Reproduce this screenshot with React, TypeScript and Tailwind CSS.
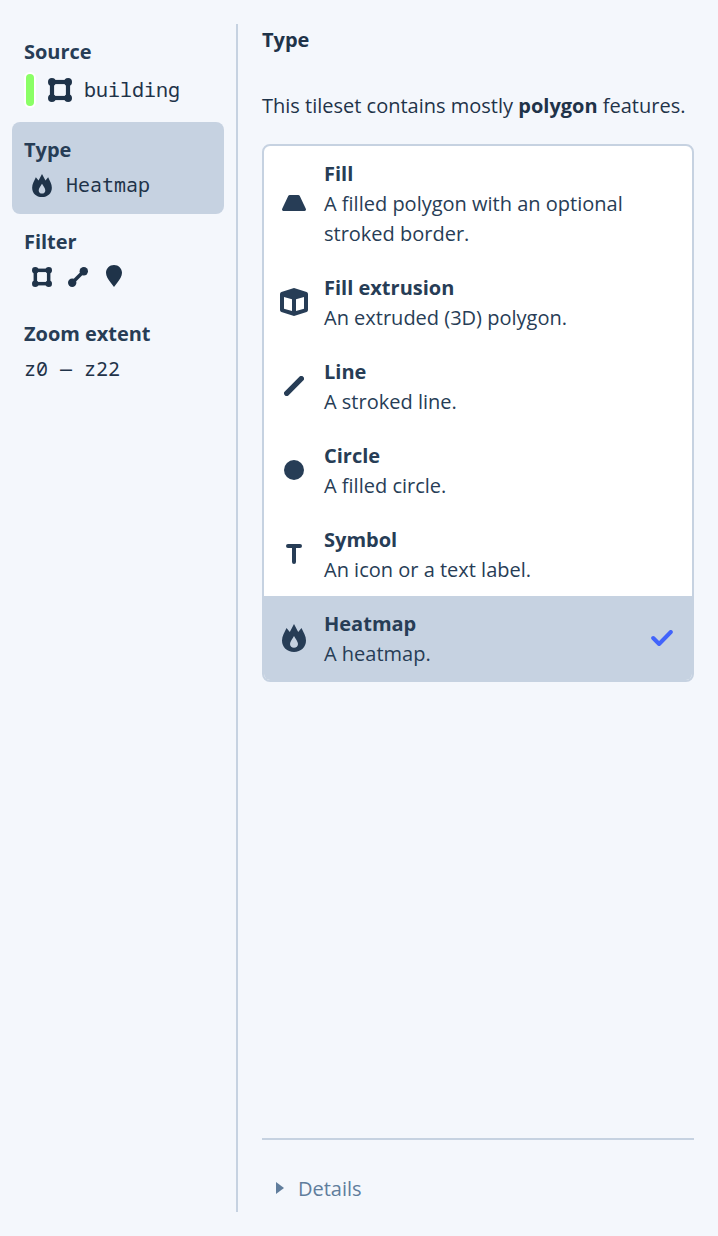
import type { ReactNode } from "react";

type IconProps = { className?: string };

function Polygon({ className = "" }: IconProps) {
  return (
    <svg viewBox="0 0 24 24" className={className} fill="currentColor">
      <rect x="4" y="4" width="16" height="16" fill="none" stroke="currentColor" strokeWidth="4.2" />
      <circle cx="3.900" cy="3.900" r="3.900" />
      <circle cx="20.100" cy="3.900" r="3.900" />
      <circle cx="3.900" cy="20.100" r="3.900" />
      <circle cx="20.100" cy="20.100" r="3.900" />
    </svg>
  );
}

function LineNodes({ className = "" }: IconProps) {
  return (
    <svg viewBox="0 0 20 20" className={className} fill="currentColor">
      <path d="M4 16 16 4" stroke="currentColor" strokeWidth="3.600" />
      <circle cx="4.2" cy="15.8" r="4.2" />
      <circle cx="15.8" cy="4.2" r="4.2" />
    </svg>
  );
}

function Marker({ className = "" }: IconProps) {
  return (
    <svg viewBox="0 0 16 22" className={className} fill="currentColor">
      <path d="M8 0C3.500 0 0 3.500 0 7.800c0 3.600 2.200 6.400 4.400 9.400L8 22l3.600-4.800C13.800 14.200 16 11.400 16 7.800 16 3.500 12.500 0 8 0Z" />
    </svg>
  );
}

function Flame({ className = "" }: IconProps) {
  return (
    <svg viewBox="0 0 24 28" className={className} fill="currentColor">
      <path
        fillRule="evenodd"
        d="M12 0 7.800 8 4.500 4C2.500 8.500 0 12 0 16.600 0 23.300 5 28 12 28s12-4.700 12-11.400C24 12 21.500 8.500 19.500 4l-3.300 4L12 0Zm0 12c1.700 3.200 4 5.500 4 8 0 2.200-1.700 3.800-4 3.800S8 22.200 8 20c0-2.500 2.300-4.800 4-8Z"
      />
    </svg>
  );
}

function Trapezoid() {
  return (
    <svg viewBox="0 0 24 16" className="h-4 w-6" fill="currentColor">
      <path d="M7.800 0h8.400c.7 0 1.300.4 1.600 1l6 12.800c.5 1.100-.1 2.200-1.200 2.200H1.400C.3 16-.3 14.900.2 13.800L6.200 1c.3-.6.9-1 1.600-1Z" />
    </svg>
  );
}

function Box() {
  return (
    <svg viewBox="0 0 28 28" className="size-7" fill="currentColor">
      <path
        fillRule="evenodd"
        d="M14 0 26.600 4Q28 4.500 28 6v16q0 1.500-1.400 2L14 28 1.400 24Q0 23.500 0 22V6q0-1.500 1.400-2L14 0ZM4 9v11.700l8 2.400V11.200L4 9Zm20 0-8 2.200v11.900l8-2.400V9Z"
      />
    </svg>
  );
}

function Slash() {
  return (
    <svg viewBox="0 0 20 20" className="size-5" fill="none">
      <path d="M2.700 17.300 17.300 2.700" stroke="currentColor" strokeWidth="5.400" strokeLinecap="round" />
    </svg>
  );
}

function Dot() {
  return (
    <svg viewBox="0 0 20 20" className="size-5" fill="currentColor">
      <circle cx="10" cy="10" r="10" />
    </svg>
  );
}

function Tee() {
  return (
    <svg viewBox="0 0 16 20" className="h-5 w-4" fill="none">
      <path d="M2 2h12M8 2v16" stroke="currentColor" strokeWidth="4" strokeLinecap="round" />
    </svg>
  );
}

function Check() {
  return (
    <svg viewBox="0 0 22 16" className="h-4 w-[22px] text-[#4264fb]" fill="none">
      <path d="m2.200 8 5.900 6L19.800 2" stroke="currentColor" strokeWidth="4" strokeLinecap="round" strokeLinejoin="round" />
    </svg>
  );
}

function Section({ title, selected = false, className = "", children }: {
  title: string;
  selected?: boolean;
  className?: string;
  children: ReactNode;
}) {
  return (
    <section className={`rounded-lg px-3 pt-[13px] ${selected ? "bg-[#c6d2e1]" : ""} ${className}`}>
      <h2 className="-mb-px font-bold tracking-[-0.04px] text-[#273d56]">{title}</h2>
      {children}
    </section>
  );
}

const mono = "font-['Noto_Sans_Mono','DejaVu_Sans_Mono',monospace]";

const types = [
  { name: "Fill", text: "A filled polygon with an optional stroked border.", icon: <Trapezoid /> },
  { name: "Fill extrusion", text: "An extruded (3D) polygon.", icon: <Box /> },
  { name: "Line", text: "A stroked line.", icon: <Slash /> },
  { name: "Circle", text: "A filled circle.", icon: <Dot /> },
  { name: "Symbol", text: "An icon or a text label.", icon: <Tee /> },
  { name: "Heatmap", text: "A heatmap.", icon: <Flame className="h-7 w-6" />, selected: true },
];

export default function App() {
  return (
    <div className="flex h-[1236px] w-[718px] bg-[#f4f7fc] py-6 font-['Open_Sans',sans-serif] text-[20px] leading-[30px] text-[#1f3349]">
      <aside className="w-[238px] shrink-0 border-r-2 border-[#c6d2e1] pr-3 pl-3">
        <Section title="Source" className="h-[98px]">
          <div className="flex h-12 items-center">
            <span className="ml-[2px] h-8 w-2 rounded-full bg-[#8aff66] ring-2 ring-white" />
            <Polygon className="ml-[14px] size-6" />
            <span className={`ml-3 ${mono}`}>building</span>
          </div>
        </Section>
        <Section title="Type" selected className="h-[92px]">
          <div className="flex h-[42px] items-center">
            <Flame className="ml-2 h-[23px] w-5" />
            <span className={`ml-[14px] ${mono}`}>Heatmap</span>
          </div>
        </Section>
        <Section title="Filter" className="h-[92px]">
          <div className="flex h-[42px] items-center pl-2">
            <Polygon className="size-5" />
            <LineNodes className="ml-4 size-5" />
            <Marker className="mb-[2px] ml-[18px] h-[22px] w-4" />
          </div>
        </Section>
        <Section title="Zoom extent" className="h-[92px]">
          <div className={`flex h-[42px] items-center ${mono}`}>z0 — z22</div>
        </Section>
      </aside>
      <main className="flex flex-1 flex-col pr-6 pl-6">
        <h1 className="pt-px font-bold">Type</h1>
        <p className="mt-9 whitespace-nowrap">
          This tileset contains mostly <strong className="font-bold">polygon</strong> features.
        </p>
        <ul className="mt-[23px] overflow-hidden rounded-lg border-2 border-[#c6d2e1] bg-white text-[#273d56]">
          {types.map((type) => (
            <li key={type.name} className={`flex items-center pr-[19px] ${type.selected ? "bg-[#c6d2e1]" : ""}`}>
              <span className="flex w-[60px] shrink-0 justify-center">{type.icon}</span>
              <div className="flex-1 pt-[13px] pb-[11px]">
                <h3 className="font-bold">{type.name}</h3>
                <p>{type.text}</p>
              </div>
              {type.selected && <Check />}
            </li>
          ))}
        </ul>
        <footer className="mt-auto flex h-[74px] items-center border-t-2 border-[#c6d2e1] pt-[25px] text-[#607d9c]">
          <svg viewBox="0 0 8 12" className="mr-[14px] mb-[2px] ml-[14px] h-3 w-2" fill="currentColor">
            <path d="m0 0 8 6-8 6Z" />
          </svg>
          <span>Details</span>
        </footer>
      </main>
    </div>
  );
}
